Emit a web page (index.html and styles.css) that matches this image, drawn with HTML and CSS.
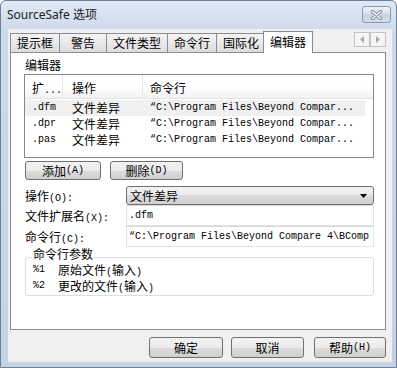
FILE: index.html
```html
<!DOCTYPE html>
<html lang="zh-CN">
<head>
	<meta charset="UTF-8">
	<title>SourceSafe 选项</title>
	<link rel="stylesheet" href="styles.css">
</head>
<body>

<div class="window">
	<div class="titlebar">
		<span class="title">SourceSafe 选项</span>
		<span class="close">
			<svg width="13" height="10" viewBox="0 0 13 10">
				<path d="M2.5 1.5 L10.5 8.5 M10.5 1.5 L2.5 8.5" stroke="#7a8696" stroke-width="3.4" stroke-linecap="round"/>
				<path d="M2.5 1.5 L10.5 8.5 M10.5 1.5 L2.5 8.5" stroke="#fbfcfd" stroke-width="1.6" stroke-linecap="round"/>
			</svg>
		</span>
	</div>

	<div class="client">
		<div class="tabs">
			<div class="tab">提示框</div>
			<div class="tab">警告</div>
			<div class="tab">文件类型</div>
			<div class="tab">命令行</div>
			<div class="tab">国际化</div>
			<div class="tab on">编辑器</div>
			<div class="tab-arrows">
				<span class="arrow"><svg width="4" height="7" viewBox="0 0 4 7"><path d="M4 0 L0 3.5 L4 7 Z" fill="#a7a7a7"/></svg></span>
				<span class="arrow"><svg width="4" height="7" viewBox="0 0 4 7"><path d="M0 0 L4 3.5 L0 7 Z" fill="#a7a7a7"/></svg></span>
			</div>
		</div>

		<div class="panel">
			<div class="sect-title">编辑器</div>

			<div class="list">
				<div class="list-head">
					<span class="col1">扩<span class="m">...</span></span>
					<span class="col2">操作</span>
					<span class="col3">命令行</span>
				</div>
				<div class="list-row hot">
					<span class="col1 m">.dfm</span>
					<span class="col2">文件差异</span>
					<span class="col3 m">“C:\Program Files\Beyond Compar...</span>
				</div>
				<div class="list-row">
					<span class="col1 m">.dpr</span>
					<span class="col2">文件差异</span>
					<span class="col3 m">“C:\Program Files\Beyond Compar...</span>
				</div>
				<div class="list-row">
					<span class="col1 m">.pas</span>
					<span class="col2">文件差异</span>
					<span class="col3 m">“C:\Program Files\Beyond Compar...</span>
				</div>
			</div>

			<div class="btn-row">
				<div class="btn btn-add">添加<span class="m">(A)</span></div>
				<div class="btn btn-del">删除<span class="m">(D)</span></div>
			</div>

			<div class="field-row first">
				<div class="field-label">操作<span class="m">(O):</span></div>
				<div class="combo">
					<span>文件差异</span>
					<svg width="7" height="4" viewBox="0 0 7 4"><path d="M0 0 L7 0 L3.5 4 Z" fill="#000"/></svg>
				</div>
			</div>
			<div class="field-row">
				<div class="field-label">文件扩展名<span class="m">(X):</span></div>
				<div class="text-field m">.dfm</div>
			</div>
			<div class="field-row">
				<div class="field-label">命令行<span class="m">(C):</span></div>
				<div class="text-field m">“C:\Program Files\Beyond Compare 4\BComp</div>
			</div>

			<div class="group">
				<div class="group-title">命令行参数</div>
				<div class="param-row"><span class="param-key m">%1</span><span>原始文件<span class="m">(</span>输入<span class="m">)</span></span></div>
				<div class="param-row"><span class="param-key m">%2</span><span>更改的文件<span class="m">(</span>输入<span class="m">)</span></span></div>
			</div>
		</div>

		<div class="actions">
			<div class="btn btn-ok">确定</div>
			<div class="btn btn-cancel">取消</div>
			<div class="btn btn-help">帮助<span class="m">(H)</span></div>
		</div>
	</div>
</div>

</body>
</html>
```

FILE: styles.css
```css
* {
	box-sizing: border-box;
}

body {
	margin: 0;
	font-family: "Noto Sans CJK SC", sans-serif;
	font-size: 12px;
	color: #000;
	background: #fff;
}

.m {
	font-family: "Liberation Mono", monospace;
	font-size: 10px;
}

.window {
	width: 397px;
	height: 368px;
	border: 1px solid #6f7f94;
	border-radius: 6px 6px 0 0;
	background: linear-gradient(#e0e9f5, #cddaea 30px, #c3d2e5);
	display: flex;
	flex-direction: column;
	padding: 0 4px 5px 7px;
}

.titlebar {
	height: 28px;
	display: flex;
	align-items: flex-start;
	justify-content: space-between;
}

.title {
	margin-top: 6px;
	margin-left: -1px;
	font-family: "Noto Sans", sans-serif;
	font-size: 12px;
	line-height: 16px;
	color: #222;
}

.close {
	width: 29px;
	height: 17px;
	margin-top: 5px;
	margin-right: 1px;
	border: 1px solid #8d9aab;
	border-radius: 3px;
	background: linear-gradient(#eef2f7, #d6dfea 50%, #c9d4e2 50%, #d3dce8);
	display: flex;
	align-items: center;
	justify-content: center;
}

.client {
	flex: 1;
	background: #f0f0f0;
	padding: 4px 0 0 2px;
	display: flex;
	flex-direction: column;
}

/* onglets */
.tabs {
	display: flex;
	align-items: flex-end;
	height: 19px;
}

.tab {
	height: 19px;
	min-width: 48px;
	padding: 0 6px;
	line-height: 18px;
	text-align: center;
	border: 1px solid #898c95;
	border-bottom: none;
	margin-right: -1px;
	background: linear-gradient(#f4f4f4, #e9e9e9 50%, #dcdcdc);
}

.tab.on {
	height: 22px;
	line-height: 19px;
	margin: 0 -2px -1px -2px;
	background: #fff;
	position: relative;
	z-index: 1;
}

.tab-arrows {
	margin-left: auto;
	margin-right: 6px;
	margin-top: -1px;
	align-self: flex-start;
	display: flex;
}

.arrow {
	width: 16px;
	height: 15px;
	border: 1px solid #c3c3c3;
	background: #f4f4f4;
	display: flex;
	align-items: center;
	justify-content: center;
}

.panel {
	width: 376px;
	height: 278px;
	border: 1px solid #898c95;
	background: #fff;
	padding: 5px 0 0 13px;
}

.sect-title {
	height: 14px;
	line-height: 14px;
	margin-left: 1px;
	margin-bottom: 2px;
}

/* liste */
.list {
	width: 350px;
	height: 84px;
	border: 1px solid #828790;
	overflow: hidden;
}

.list-head {
	display: flex;
	height: 24px;
	border-bottom: 1px solid #e2e4e8;
	background: linear-gradient(#fff, #fff 50%, #f1f2f4);
}

.list-head span {
	padding-top: 6px;
	line-height: 14px;
}

.list-head .col1,
.list-head .col2 {
	border-right: 1px solid #e3e8ee;
}

.list-head .col1 .m {
	padding: 0;
	border: none;
}

.col1 {
	width: 38px;
	padding-left: 7px;
}

.col2 {
	width: 80px;
	padding-left: 9px;
}

.col3 {
	flex: 1;
	padding-left: 7px;
	white-space: nowrap;
}

.list-row {
	display: flex;
	height: 16px;
	line-height: 16px;
}

.list-row.hot {
	margin-top: 1px;
	margin-right: 8px;
	background: #f0f0f0;
}

/* boutons */
.btn {
	height: 19px;
	border: 1px solid #707070;
	border-radius: 3px;
	background: linear-gradient(#f2f2f2, #ebebeb 50%, #dddddd 50%, #cfcfcf);
	display: flex;
	align-items: center;
	justify-content: center;
	line-height: 16px;
}

.btn-row {
	display: flex;
	gap: 9px;
	margin-top: 3px;
	margin-left: 1px;
}

.btn-add {
	width: 76px;
}

.btn-del {
	width: 73px;
}

/* formulaire */
.field-row {
	display: flex;
	align-items: center;
}

.field-row.first {
	margin-top: 6px;
}

.field-label {
	width: 102px;
	padding-left: 1px;
	white-space: nowrap;
}

.combo {
	width: 248px;
	height: 19px;
	border: 1px solid #707070;
	border-radius: 3px;
	background: linear-gradient(#f2f2f2, #ebebeb 50%, #dddddd 50%, #cfcfcf);
	display: flex;
	align-items: center;
	justify-content: space-between;
	padding: 0 6px 0 3px;
	line-height: 16px;
}

.text-field {
	width: 248px;
	height: 21px;
	line-height: 19px;
	padding-left: 2px;
	border: 1px solid #e1e3e8;
	border-top-color: #d4d7dc;
	white-space: nowrap;
	overflow: hidden;
}

/* paramètres */
.group {
	width: 349px;
	margin: 10px 0 0 1px;
	border: 1px solid #d5dfe5;
	border-radius: 3px;
	padding: 0 0 1px 7px;
}

.group-title {
	width: fit-content;
	background: #fff;
	padding: 0 1px;
	margin: -10px 0 2px -1px;
	line-height: 12px;
}

.param-row {
	display: flex;
	height: 16px;
	line-height: 16px;
}

.param-key {
	width: 25px;
}

.actions {
	display: flex;
	justify-content: flex-end;
	margin-top: 7px;
	padding-right: 6px;
}

.actions .btn {
	height: 21px;
}

.btn-ok {
	width: 74px;
	margin-right: 8px;
}

.btn-cancel {
	width: 73px;
	margin-right: 10px;
}

.btn-help {
	width: 72px;
}
```
